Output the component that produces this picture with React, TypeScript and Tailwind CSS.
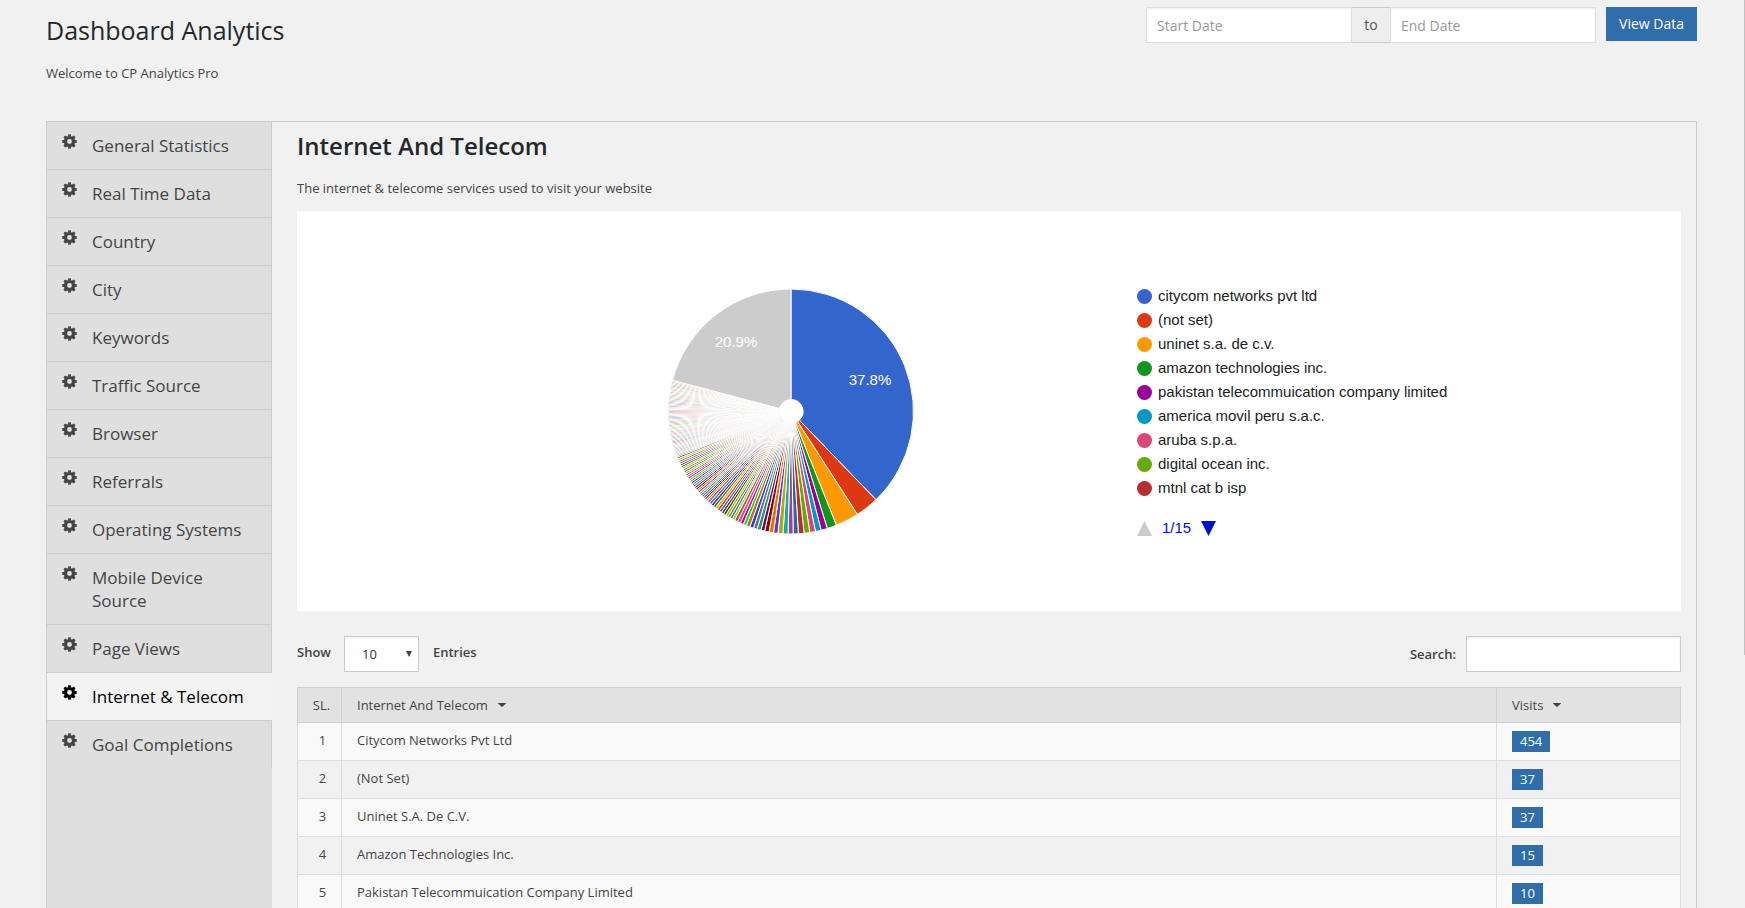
import React from "react";

const menu = [
  "General Statistics",
  "Real Time Data",
  "Country",
  "City",
  "Keywords",
  "Traffic Source",
  "Browser",
  "Referrals",
  "Operating Systems",
  "Mobile Device Source",
  "Page Views",
  "Internet & Telecom",
  "Goal Completions",
];

const palette = [
  "#3366cc", "#dc3912", "#ff9900", "#109618", "#990099", "#0099c6", "#dd4477", "#66aa00",
  "#b82e2e", "#316395", "#994499", "#22aa99", "#aaaa11", "#6633cc", "#e67300", "#8b0707",
  "#651067", "#329262", "#5574a6", "#3b3eac", "#b77322", "#16d620", "#b91383", "#f4359e",
  "#9c5935", "#a9c413", "#2a778d", "#668d1c", "#bea413", "#0c5922", "#743411",
];

const repeat = (value: number, times: number) => Array<number>(times).fill(value);

const visits = [
  454, 37, 37, 15, 10,
  ...repeat(9, 4), ...repeat(8, 4), ...repeat(7, 3), ...repeat(6, 5),
  ...repeat(5, 4), ...repeat(4, 13), ...repeat(3, 28), ...repeat(2, 61),
];
const otherVisits = 251;

const legend = [
  "citycom networks pvt ltd",
  "(not set)",
  "uninet s.a. de c.v.",
  "amazon technologies inc.",
  "pakistan telecommuication company limited",
  "america movil peru s.a.c.",
  "aruba s.p.a.",
  "digital ocean inc.",
  "mtnl cat b isp",
];

const rows: [string, number][] = [
  ["Citycom Networks Pvt Ltd", 454],
  ["(Not Set)", 37],
  ["Uninet S.A. De C.V.", 37],
  ["Amazon Technologies Inc.", 15],
  ["Pakistan Telecommuication Company Limited", 10],
];

const teeth = [0, 45, 90, 135, 180, 225, 270, 315];

function Gear() {
  return (
    <svg viewBox="-7.5 -7.5 15 15" className="h-[15px] w-[15px] shrink-0" fill="currentColor" aria-hidden="true">
      <circle r="4" fill="none" stroke="currentColor" strokeWidth="3.2" />
      {teeth.map((angle) => (
        <path key={angle} d="M-1.7-5-1.2-7.3H1.2L1.7-5z" transform={`rotate(${angle})`} />
      ))}
    </svg>
  );
}

function Caret() {
  return (
    <svg viewBox="0 0 8 4" className="h-1 w-2" fill="#444" aria-hidden="true">
      <path d="M0.4 0h7.2a.4.4 0 0 1 .3.6L4.4 3.8a.6.6 0 0 1-.8 0L.1.6A.4.4 0 0 1 .4 0z" />
    </svg>
  );
}

function Pie() {
  const cx = 124;
  const cy = 124.5;
  const outer = 122.5;
  const inner = 12;
  const total = visits.reduce((a, b) => a + b, 0) + otherVisits;
  const slices = [...visits, otherVisits];
  let sum = 0;
  return (
    <svg viewBox="0 0 248 248" className="h-[248px] w-[248px] shrink-0" role="img" aria-label="Visits by network">
      {slices.map((value, i) => {
        const a = (sum / total) * Math.PI * 2;
        sum += value;
        const b = (sum / total) * Math.PI * 2;
        const large = b - a > Math.PI ? 1 : 0;
        const point = (r: number, t: number) => `${cx + r * Math.sin(t)} ${cy - r * Math.cos(t)}`;
        const d = `M${point(inner, a)}L${point(outer, a)}A${outer} ${outer} 0 ${large} 1 ${point(outer, b)}L${point(inner, b)}A${inner} ${inner} 0 ${large} 0 ${point(inner, a)}Z`;
        const fill = i === visits.length ? "#cccccc" : palette[i % palette.length];
        return <path key={i} d={d} fill={fill} stroke="#ffffff" strokeWidth="1" />;
      })}
      <g fontSize="15" fill="#fff" textAnchor="middle" className="font-['Liberation_Sans',Arial,sans-serif]">
        <text x="203" y="98">37.8%</text>
        <text x="69" y="60">20.9%</text>
      </g>
    </svg>
  );
}

function Legend() {
  return (
    <div className="pt-0.5 font-['Liberation_Sans',Arial,sans-serif] text-[15px] leading-6 text-[#222]">
      <ul>
        {legend.map((name, i) => (
          <li key={name} className="flex items-center gap-1.5 whitespace-nowrap">
            <svg viewBox="0 0 15 15" className="h-[15px] w-[15px]" aria-hidden="true">
              <circle cx="7.5" cy="7.5" r="7.5" fill={palette[i]} />
            </svg>
            {name}
          </li>
        ))}
      </ul>
      <div className="mt-4 flex items-center gap-[10px] text-[#0011cc]">
        <button type="button" aria-label="Previous page">
          <svg viewBox="0 0 15 15" className="h-[15px] w-[15px]"><path d="M7.5 0 15 15H0z" fill="#ccc" /></svg>
        </button>
        <span>1/15</span>
        <button type="button" aria-label="Next page">
          <svg viewBox="0 0 15 15" className="h-[15px] w-[15px]"><path d="M0 0h15L7.5 15z" fill="#0011cc" /></svg>
        </button>
      </div>
    </div>
  );
}

const dateField =
  "h-9 w-[206px] border border-[#ddd] bg-white px-[10px] text-sm text-[#444] shadow-[inset_0_1px_2px_rgba(0,0,0,0.07)] outline-none placeholder:text-[#999]";

export default function App() {
  return (
    <div className="flex h-screen flex-col overflow-hidden bg-[#f1f1f1] pr-12 pl-[46px] font-['Open_Sans',sans-serif] text-[13px] leading-5 text-[#444]">
      <div className="fixed top-0 right-0 h-[655px] w-px bg-[#c1c1c1]" />
      <header className="flex h-[121px] shrink-0 items-start justify-between pt-[7px]">
        <div>
          <h1 className="pt-[7px] text-[25px] leading-8 text-[#23282d]">Dashboard Analytics</h1>
          <p className="mt-[17px]">Welcome to CP Analytics Pro</p>
        </div>
        <form className="flex items-start" onSubmit={(e) => e.preventDefault()}>
          <input className={dateField} placeholder="Start Date" aria-label="Start Date" />
          <span className="flex h-9 w-[38px] items-center justify-center border-y border-[#ccc] bg-[#eee] text-sm text-[#555]">
            to
          </span>
          <input className={dateField} placeholder="End Date" aria-label="End Date" />
          <button type="submit" className="ml-[10px] h-[34px] w-[91px] bg-[#306dab] text-sm text-white">
            View Data
          </button>
        </form>
      </header>

      <div className="flex flex-1 border border-b-0 border-[#ccc]">
        <nav className="w-[225px] shrink-0 bg-[#dfdfdf]">
          {menu.map((item) => {
            const active = item === "Internet & Telecom";
            return (
              <a
                key={item}
                href="#"
                aria-current={active ? "page" : undefined}
                className={
                  "flex gap-[15px] border-b border-[#ccc] py-3 pr-4 pl-[15px] text-[17px] leading-[23px] last:border-b-0 " +
                  (active ? "bg-[#f3f3f3] text-black" : "border-r border-r-[#ccc]")
                }
              >
                <Gear />
                <span>{item}</span>
              </a>
            );
          })}
        </nav>

        <main className="min-w-0 flex-1 pt-2 pr-[15px] pl-[25px]">
          <h2 className="text-2xl leading-8 font-semibold text-[#23282d]">Internet And Telecom</h2>
          <p className="mt-4">The internet &amp; telecome services used to visit your website</p>

          <section className="mt-[13px] grid h-[400px] grid-cols-[840fr_544fr] items-center bg-white">
            <div className="flex justify-center pl-[148px]">
              <Pie />
            </div>
            <Legend />
          </section>

          <div className="mt-[25px] flex items-center justify-between font-semibold">
            <div className="flex items-center">
              <label htmlFor="entries" className="pb-1">Show</label>
              <div className="relative ml-[13px]">
                <select
                  id="entries"
                  defaultValue="10"
                  className="h-9 w-[75px] appearance-none border border-[#ccc] bg-white pl-[17px] text-[13px] font-normal text-[#333] shadow-[inset_0_1px_2px_rgba(0,0,0,0.07)]"
                >
                  <option>10</option>
                  <option>25</option>
                  <option>50</option>
                </select>
                <svg viewBox="0 0 6 6" className="pointer-events-none absolute top-[15px] right-[7px] h-1.5 w-1.5" fill="#444" aria-hidden="true">
                  <path d="M0 0h6L3 6z" />
                </svg>
              </div>
              <span className="ml-[14px] pb-1">Entries</span>
            </div>
            <div className="flex items-center gap-[10px]">
              <label htmlFor="search">Search:</label>
              <input
                id="search"
                className="h-9 w-[215px] border border-[#ccc] bg-white px-2 shadow-[inset_0_1px_2px_rgba(0,0,0,0.07)] outline-none"
              />
            </div>
          </div>

          <table className="mt-[15px] w-full table-fixed border-collapse">
            <colgroup>
              <col className="w-11" />
              <col />
              <col className="w-[184px]" />
            </colgroup>
            <thead>
              <tr className="h-[35px] bg-[#e2e2e2] text-left">
                <th className="border border-[#d0d0d0] pl-1 text-center font-normal">SL.</th>
                <th className="border border-[#d0d0d0] px-[15px] font-normal">
                  <button type="button" className="flex items-center gap-[10px]">
                    Internet And Telecom <Caret />
                  </button>
                </th>
                <th className="border border-[#d0d0d0] px-[15px] font-normal">
                  <button type="button" className="flex items-center gap-[10px]">
                    Visits <Caret />
                  </button>
                </th>
              </tr>
            </thead>
            <tbody>
              {rows.map(([name, count], i) => (
                <tr key={name} className="h-[38px] odd:bg-[#f9f9f9]">
                  <td className="border border-[#ddd] pb-1 pl-1.5 text-center">{i + 1}</td>
                  <td className="border border-[#ddd] px-[15px] pb-1">{name}</td>
                  <td className="border border-[#ddd] px-[15px] pb-0.5">
                    <span className="inline-block bg-[#306dab] px-2 align-middle leading-[21px] text-white">{count}</span>
                  </td>
                </tr>
              ))}
            </tbody>
          </table>
        </main>
      </div>
    </div>
  );
}
